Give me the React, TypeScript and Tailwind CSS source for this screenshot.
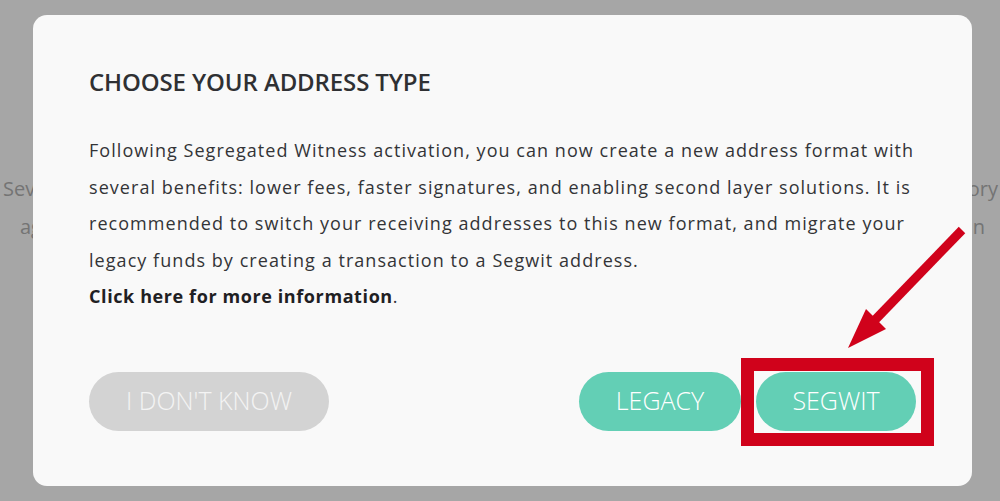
import { useState } from 'react';

type Choice = 'unknown' | 'legacy' | 'segwit';

export default function App() {
  const [choice, setChoice] = useState<Choice | null>(null);

  return (
    <div className="relative h-[501px] w-[1000px] overflow-hidden bg-[#a6a6a6] font-['Open_Sans',sans-serif]">
      {/* Page behind the dialog */}
      <div className="flex flex-col pt-[170px] text-[20px] text-[#747474]">
        <div className="flex h-[38px] items-center justify-between pl-[3px] pr-[2px]">
          <span>Several</span>
          <span>history</span>
        </div>
        <div className="flex h-[38px] items-center justify-between pl-[20px] pr-[15px]">
          <span>again</span>
          <span>in</span>
        </div>
      </div>

      {/* Dialog */}
      <div className="absolute left-[33px] top-[15px] flex h-[471px] w-[939px] flex-col rounded-[14px] bg-[#f9f9f9] px-14 pt-[52px]">
        <h1 className="text-[24px] font-semibold leading-[30px] tracking-[-0.005em] text-[#2f3033]">
          CHOOSE YOUR ADDRESS TYPE
        </h1>

        <p className="mt-[35px] whitespace-nowrap text-[18px] leading-[36.5px] tracking-[1.05px] text-[#333437]">
          Following Segregated Witness activation, you can now create a new address format with
          <br />
          several benefits: lower fees, faster signatures, and enabling second layer solutions. It is
          <br />
          recommended to switch your receiving addresses to this new format, and migrate your
          <br />
          legacy funds by creating a transaction to a Segwit address.
          <br />
          <a className="font-bold tracking-[0.6px] text-[#1f2023]">Click here for more information</a>.
        </p>

        <div className="mt-[57px] flex items-center">
          <button
            onClick={() => setChoice('unknown')}
            className="h-[59px] w-[240px] rounded-full bg-[#d3d3d3] text-[25px] font-light tracking-[0em] text-[#f4f4f4]"
          >
            I DON'T KNOW
          </button>
          <div className="ml-auto flex gap-[15px]">
            <button
              onClick={() => setChoice('legacy')}
              className="h-[59px] w-[162px] rounded-full bg-[#63cfb5] text-[25px] font-light tracking-[0em] text-white"
            >
              LEGACY
            </button>
            <button
              onClick={() => setChoice('segwit')}
              className="h-[59px] w-[160px] rounded-full bg-[#63cfb5] text-[25px] font-light tracking-[0em] text-white"
            >
              SEGWIT
            </button>
          </div>
        </div>
        {choice && <span className="sr-only">{choice}</span>}
      </div>

      {/* Annotation: red box around SEGWIT */}
      <div className="pointer-events-none absolute left-[741px] top-[358px] h-[88px] w-[193px] border-[13px] border-[#d0021b]" />

      {/* Annotation: arrow */}
      <svg className="pointer-events-none absolute left-0 top-0" width="1000" height="501" viewBox="0 0 1000 501">
        <line x1="962" y1="230" x2="874" y2="321" stroke="#d0021b" strokeWidth="9" />
        <polygon points="848,348 886,329 866,309" fill="#d0021b" />
      </svg>
    </div>
  );
}
